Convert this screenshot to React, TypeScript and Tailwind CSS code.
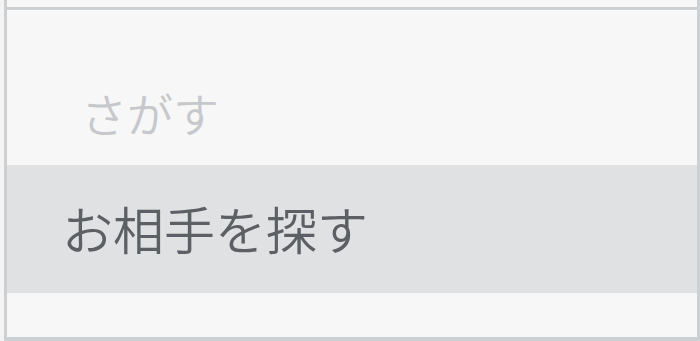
import React from "react";

export default function App() {
  return (
    <div
      className="w-[700px] h-[341px] bg-[#f4f4f4] overflow-hidden"
      style={{ fontFamily: '"Noto Sans CJK JP", "Noto Sans", sans-serif' }}
    >
      <div className="ml-[4px] w-[696px] h-[341px] flex flex-col border-l-[3px] border-r-[3px] border-b-[4px] border-[#cdd0d3] bg-[#f7f7f7]">
        <div className="h-[7px] bg-[#f7f7f7]" />
        <div className="h-[3px] bg-[#cdd0d3]" />
        <div className="h-[1px] bg-white" />
        <div className="h-[154px] pt-[78px] pl-[74px]">
          <div className="text-[46px] leading-[46px] text-[#c6c8cb] font-[350]">さがす</div>
        </div>
        <div className="h-[128px] bg-[#e0e1e3] flex items-center pl-[55px] pb-[2px]">
          <div className="text-[51px] leading-[51px] text-[#5c6064] font-[350]">お相手を探す</div>
        </div>
        <div className="flex-1" />
      </div>
    </div>
  );
}
